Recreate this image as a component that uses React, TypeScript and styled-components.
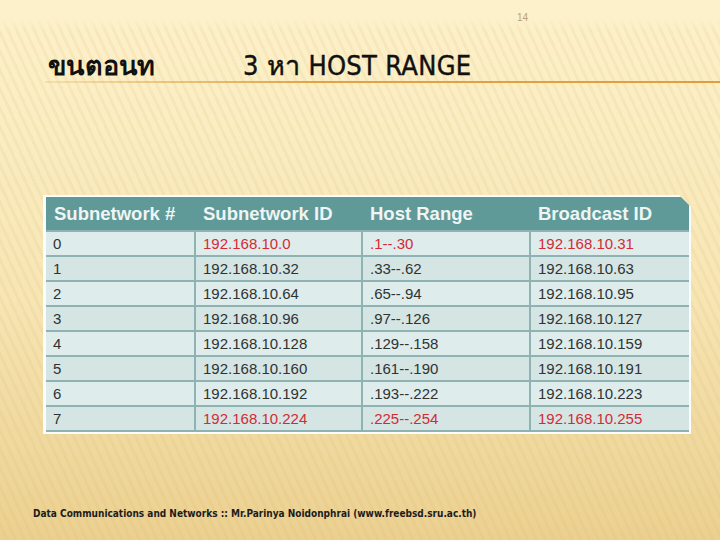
import React from 'react';
import styled, { createGlobalStyle } from 'styled-components';

const GlobalStyle = createGlobalStyle`
  html, body {
    margin: 0;
    padding: 0;
  }
  body {
    width: 720px;
    height: 540px;
    overflow: hidden;
  }
`;

const Slide = styled.div`
  width: 720px;
  height: 540px;
  box-sizing: border-box;
  display: flex;
  flex-direction: column;
  position: relative;
  background:
    repeating-linear-gradient(
      65deg,
      rgba(255, 255, 255, 0) 0px,
      rgba(255, 255, 255, 0) 5px,
      rgba(214, 180, 100, 0.13) 5px,
      rgba(214, 180, 100, 0.13) 8px
    ),
    linear-gradient(180deg, #fdf1cb 0%, #fbeec4 20%, #f7e5b4 55%, #ebd090 100%);
`;

const TopFade = styled.div`
  height: 30px;
  background: linear-gradient(180deg, #fdf1cc 0%, #fdf1cc 60%, rgba(253, 241, 204, 0) 100%);
  display: flex;
  justify-content: flex-end;
  padding-right: 192px;
  align-items: flex-end;
`;

const PageNumber = styled.span`
  font-family: 'Liberation Sans', Arial, sans-serif;
  font-size: 10px;
  color: #b9a074;
  padding-bottom: 7px;
`;

const TitleRow = styled.div`
  display: flex;
  align-items: baseline;
  padding: 14px 0 0 48px;
  height: 37px;
  font-family: 'DejaVu Sans Condensed', 'Noto Sans', sans-serif;
  font-size: 27px;
  font-weight: bold;
  color: #111;
  letter-spacing: 0.3px;
`;

const TitleStep = styled.span`
  width: 195px;
`;

const TitleRange = styled.span`
  font-weight: normal;
  font-stretch: condensed;
  -webkit-text-stroke: 0.4px #111;
`;

const Rule = styled.div`
  margin-left: 45px;
  height: 2px;
  background: linear-gradient(90deg, rgba(224, 160, 64, 0.2) 0%, #e0a447 40%, #e09e40 100%);
`;

const TableArea = styled.div`
  padding: 112px 29px 0 43px;
`;

const Frame = styled.div`
  width: 648px;
  background: #fbfdfd;
  padding: 2px 2px 2px 3px;
  box-sizing: border-box;
  clip-path: polygon(0 0, calc(100% - 12px) 0, 100% 12px, 100% 100%, 0 100%);
`;

const Grid = styled.table`
  width: 100%;
  border-collapse: collapse;
  table-layout: fixed;
  font-family: 'Liberation Sans', Arial, sans-serif;
`;

const HeadCell = styled.th`
  background: #5f9998;
  color: #eef5f4;
  font-size: 18.5px;
  font-weight: bold;
  text-align: left;
  padding: 0 0 0 8px;
  height: 33px;
  white-space: nowrap;
`;

const Row = styled.tr<{ $shade: boolean }>`
  background: ${p => (p.$shade ? '#d5e5e4' : '#dfecec')};
`;

const Cell = styled.td<{ $hot?: boolean }>`
  height: 23px;
  padding: 0 0 0 7px;
  font-size: 15px;
  color: ${p => (p.$hot ? '#d42a34' : '#2e3333')};
  border: 2px solid #8fb3b3;
  white-space: nowrap;
  &:first-child {
    border-left: none;
  }
  &:last-child {
    border-right: none;
  }
`;

const Footer = styled.div`
  margin-top: auto;
  padding: 0 0 21px 33px;
  font-family: 'DejaVu Sans Condensed', sans-serif;
  font-weight: bold;
  font-size: 10px;
  color: #1c1c1c;
`;

const rows = [
  ['0', '192.168.10.0', '.1--.30', '192.168.10.31'],
  ['1', '192.168.10.32', '.33--.62', '192.168.10.63'],
  ['2', '192.168.10.64', '.65--.94', '192.168.10.95'],
  ['3', '192.168.10.96', '.97--.126', '192.168.10.127'],
  ['4', '192.168.10.128', '.129--.158', '192.168.10.159'],
  ['5', '192.168.10.160', '.161--.190', '192.168.10.191'],
  ['6', '192.168.10.192', '.193--.222', '192.168.10.223'],
  ['7', '192.168.10.224', '.225--.254', '192.168.10.255'],
];

const hotRows = [0, 7];

export default function App() {
  return (
    <>
      <GlobalStyle />
      <Slide>
        <TopFade>
          <PageNumber>14</PageNumber>
        </TopFade>
        <TitleRow>
          <TitleStep>ขนตอนท</TitleStep>
          <TitleRange>3 หา HOST RANGE</TitleRange>
        </TitleRow>
        <Rule />
        <TableArea>
          <Frame>
            <Grid>
              <colgroup>
                <col style={{ width: 149 }} />
                <col style={{ width: 167 }} />
                <col style={{ width: 168 }} />
                <col />
              </colgroup>
              <thead>
                <tr>
                  <HeadCell>Subnetwork #</HeadCell>
                  <HeadCell>Subnetwork ID</HeadCell>
                  <HeadCell>Host Range</HeadCell>
                  <HeadCell>Broadcast ID</HeadCell>
                </tr>
              </thead>
              <tbody>
                {rows.map((r, i) => {
                  const hot = hotRows.includes(i);
                  return (
                    <Row key={r[0]} $shade={i % 2 === 1}>
                      <Cell>{r[0]}</Cell>
                      <Cell $hot={hot}>{r[1]}</Cell>
                      <Cell $hot={hot}>{r[2]}</Cell>
                      <Cell $hot={hot}>{r[3]}</Cell>
                    </Row>
                  );
                })}
              </tbody>
            </Grid>
          </Frame>
        </TableArea>
        <Footer>Data Communications and Networks :: Mr.Parinya Noidonphrai (www.freebsd.sru.ac.th)</Footer>
      </Slide>
    </>
  );
}
